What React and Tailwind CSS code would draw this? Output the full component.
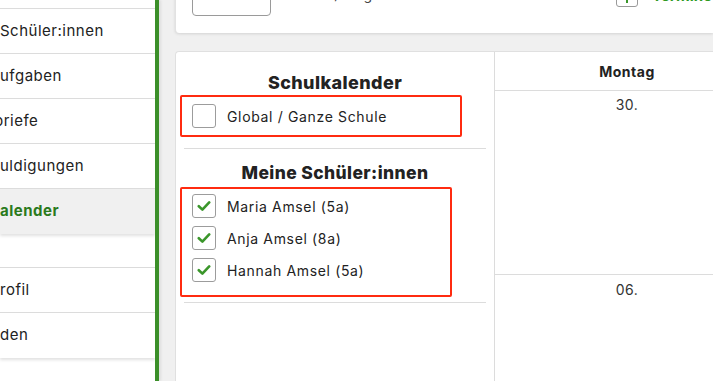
import React from "react";

const font = { fontFamily: "Inter, 'Noto Sans', sans-serif" };

function Check() {
  return (
    <svg width="14" height="12" viewBox="0 0 14 12" fill="none">
      <path d="M1.8 6.2 L5.4 9.6 L12.2 2.4" stroke="#3a962a" strokeWidth="2.6" strokeLinecap="round" strokeLinejoin="round" />
    </svg>
  );
}

function Box({ checked }) {
  return (
    <div className="w-[24px] h-[24px] shrink-0 rounded-[3px] border border-[#9c9c9c] bg-white flex items-center justify-center">
      {checked ? <Check /> : null}
    </div>
  );
}

function Item({ checked, label }) {
  return (
    <div className="flex items-center h-[24px]">
      <Box checked={checked} />
      <span className="ml-[11px] text-[14px] tracking-[0.65px] text-[#222]">{label}</span>
    </div>
  );
}

function SideRow({ children, ml = "ml-0" }) {
  return (
    <div className="h-[45px] border-b border-[#dcdcdc] flex items-center overflow-hidden bg-white">
      <span className={`${ml} whitespace-nowrap text-[15px] tracking-[0.5px] text-[#222]`}>{children}</span>
    </div>
  );
}

export default function App() {
  return (
    <div className="w-[713px] h-[381px] overflow-hidden flex bg-[#f0f0f0]" style={font}>
      {/* sidebar */}
      <div className="w-[155px] shrink-0 bg-white flex flex-col overflow-hidden">
        <div className="mt-[-36px] shadow-[0_2px_3px_rgba(0,0,0,0.12)]">
          <SideRow>Übersicht</SideRow>
          <SideRow>Schüler:innen</SideRow>
          <SideRow>ufgaben</SideRow>
          <SideRow ml="ml-[-6px]">briefe</SideRow>
          <SideRow>uldigungen</SideRow>
          <div className="h-[45px] bg-[#f0f0f0] flex items-center">
            <span className="whitespace-nowrap text-[15px] tracking-[0.5px] text-[#2b7a1c] font-bold">alender</span>
          </div>
        </div>
        <div className="h-[34px] border-b border-[#dcdcdc]" />
        <div className="shadow-[0_2px_3px_rgba(0,0,0,0.12)]">
          <SideRow>rofil</SideRow>
          <div className="h-[45px] bg-white flex items-center">
            <span className="whitespace-nowrap text-[15px] tracking-[0.5px] text-[#222]">den</span>
          </div>
        </div>
      </div>
      {/* green bar */}
      <div className="w-[4px] shrink-0 bg-[#3b8f29] shadow-[2px_0_3px_rgba(0,0,0,0.08)]" />
      {/* main */}
      <div className="flex-1 min-w-0 pl-[16px] flex flex-col overflow-hidden">
        <div className="mt-[-40px] h-[73px] shrink-0 bg-white rounded-l-[4px] border-l border-[#e2e2e2] shadow-[0_1px_3px_rgba(0,0,0,0.12)] flex items-end pb-[17px] overflow-hidden">
          <div className="ml-[16px] w-[79px] h-[40px] shrink-0 rounded-[4px] border border-[#9a9a9a] flex items-end justify-center pb-[14px] text-[14px] leading-[16px] text-[#999]">Heute</div>
          <div className="ml-[34px] w-[160px] shrink-0 mb-[13px] text-[14px] leading-[16px] text-[#444] tracking-[0.5px] whitespace-nowrap">Juli / August 2024</div>
          <div className="ml-[151px] w-[22px] h-[30px] shrink-0 rounded-[3px] border border-[#9a9a9a] mb-[9px] flex items-end justify-center pb-[3px]">
            <div className="w-[2px] h-[6px] bg-[#3a962a]" />
          </div>
          <div className="ml-[14px] mb-[11px] text-[15px] leading-[18px] font-bold text-[#2e9a1f] whitespace-nowrap">Termine</div>
        </div>
        <div className="mt-[18px] flex-1 bg-white rounded-tl-[4px] border-l border-t border-[#e0e0e0] flex min-h-0">
          {/* left column */}
          <div className="w-[319px] shrink-0 border-r border-[#dcdcdc] flex flex-col">
            <div className="pt-[19px] h-[43px] text-center text-[18px] leading-[24px] font-extrabold text-[#222] tracking-[0.4px]">Schulkalender</div>
            <div className="ml-[4px] w-[282px] h-[42px] border-2 border-[#ff2b10] rounded-[2px] pl-[10px] flex items-center">
              <Item checked={false} label="Global / Ganze Schule" />
            </div>
            <div className="mt-[11px] ml-[8px] mr-[8px] h-px bg-[#dcdcdc]" />
            <div className="mt-[12px] h-[24px] text-center text-[17.5px] leading-[24px] font-extrabold text-[#222] tracking-[0.4px]">Meine Schüler:innen</div>
            <div className="mt-[2px] ml-[4px] w-[272px] h-[110px] border-2 border-[#ff2b10] rounded-[2px] pl-[10px] pt-[5px] flex flex-col gap-[8px]">
              <Item checked label="Maria Amsel (5a)" />
              <Item checked label="Anja Amsel (8a)" />
              <Item checked label="Hannah Amsel (5a)" />
            </div>
            <div className="mt-[5px] ml-[8px] mr-[8px] h-px bg-[#dcdcdc]" />
          </div>
          {/* calendar */}
          <div className="flex-1 min-w-0 overflow-hidden">
            <div className="w-[264px] flex flex-col">
              <div className="h-[39px] border-b border-[#dcdcdc] flex items-center justify-center text-[14px] font-bold text-[#222] tracking-[0.5px]">Montag</div>
              <div className="h-[184px] border-b border-[#dcdcdc] pt-[5px] text-center text-[14px] leading-[18px] text-[#333] tracking-[0.5px]">30.</div>
              <div className="pt-[6px] text-center text-[14px] leading-[18px] text-[#333] tracking-[0.5px]">06.</div>
            </div>
          </div>
        </div>
      </div>
    </div>
  );
}
